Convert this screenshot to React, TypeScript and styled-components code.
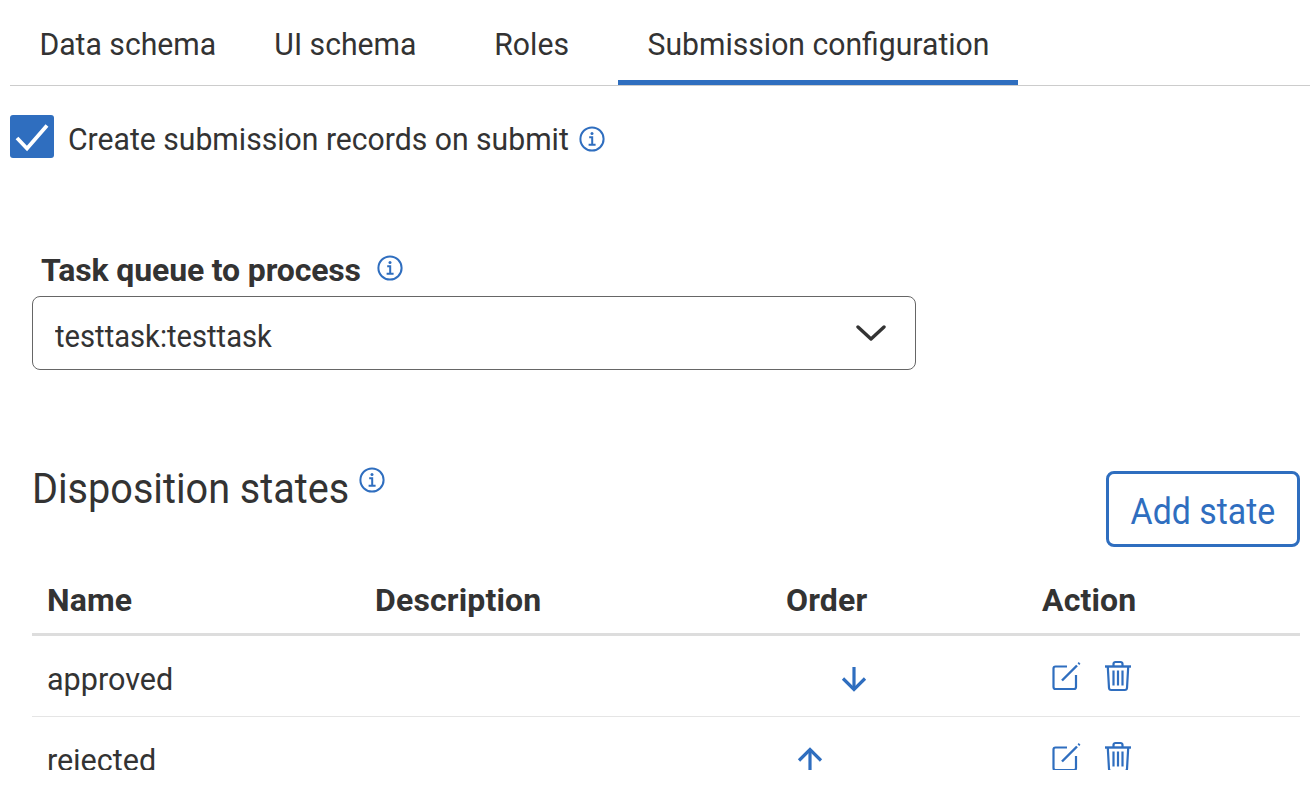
import React from 'react';
import styled, { createGlobalStyle } from 'styled-components';

const Global = createGlobalStyle`
    html, body {
        margin: 0;
        padding: 0;
        background: #fff;
        overflow: hidden;
    }
    body {
        font-family: Roboto, "Liberation Sans", sans-serif;
        color: #333;
    }
`;

const BLUE = '#2f6ebf';

const InfoIcon: React.FC = () => (
    <svg width="26" height="26" viewBox="0 0 26 26" fill="none" stroke={BLUE}>
        <circle cx="13" cy="13" r="11.6" strokeWidth="2" />
        <circle cx="13" cy="7.6" r="1.5" fill={BLUE} stroke="none" />
        <path d="M10.2 11.2h3v7.4M9.6 18.8h7" strokeWidth="2" />
    </svg>
);

const EditIcon = () => (
    <svg width="30" height="30" viewBox="0 0 30 30" fill="none" stroke={BLUE} strokeWidth="2.2">
        <path d="M16 5.5H4.5a2 2 0 0 0-2 2V26a2 2 0 0 0 2 2H23a2 2 0 0 0 2-2V14" />
        <path d="M11 19.5 26 4.5" strokeWidth="2.4" />
        <path d="M27.4 3.1 28.6 1.9" strokeWidth="2.4" />
    </svg>
);

const TrashIcon = () => (
    <svg width="28" height="32" viewBox="0 0 28 32" fill="none" stroke={BLUE} strokeWidth="2.2">
        <path d="M1 6.5h26" strokeWidth="2.4" />
        <path d="M9.5 6V3.8A2 2 0 0 1 11.5 2h5a2 2 0 0 1 2 1.8V6" />
        <path d="M3.8 7l1.2 21a2.2 2.2 0 0 0 2.2 2h13.6a2.2 2.2 0 0 0 2.2-2l1.2-21" />
        <path d="M9.5 10.5v15M14 10.5v15M18.5 10.5v15" />
    </svg>
);

const ArrowIcon: React.FC<{ up?: boolean }> = ({ up }) => (
    <svg width="26" height="26" viewBox="0 0 26 26" fill="none" stroke={BLUE} strokeWidth="3.2"
        style={up ? { transform: 'rotate(180deg)' } : undefined}>
        <path d="M13 1v22" />
        <path d="M2 12.5 13 23.5 24 12.5" />
    </svg>
);

const tabs = [
    { label: 'Data schema', width: 235 },
    { label: 'UI schema', width: 200 },
    { label: 'Roles', width: 173 },
    { label: 'Submission configuration', width: 400, active: true },
];

const rows = [
    { name: 'approved', order: 'down' },
    { name: 'rejected', order: 'up' },
];

const App: React.FC = () => {
    return (
        <S.Page>
            <Global />
            <S.TabBar>
                {tabs.map((t) => (
                    <S.Tab key={t.label} $width={t.width} $active={t.active}>
                        <S.TabText>{t.label}</S.TabText>
                    </S.Tab>
                ))}
            </S.TabBar>

            <S.CheckRow>
                <S.CheckBox>
                    <svg width="44" height="43" viewBox="0 0 44 43" fill="none" stroke="#fff" strokeWidth="3.8">
                        <path d="M7 23 17 33.5 37 10.5" />
                    </svg>
                </S.CheckBox>
                <S.CheckLabel>Create submission records on submit</S.CheckLabel>
                <S.InfoSlot $top={4}><InfoIcon /></S.InfoSlot>
            </S.CheckRow>

            <S.Section>
                <S.FieldLabel>
                    Task queue to process
                    <S.InfoSlot $top={-5}><InfoIcon /></S.InfoSlot>
                </S.FieldLabel>
                <S.Select>
                    <S.SelectValue>testtask:testtask</S.SelectValue>
                    <svg width="30" height="18" viewBox="0 0 30 18" fill="none" stroke="#333" strokeWidth="3.4" strokeLinecap="round" strokeLinejoin="round">
                        <path d="M2 3 15 15 28 3" />
                    </svg>
                </S.Select>

                <S.StatesHeader>
                    <S.Title>
                        <S.TitleText>Disposition states</S.TitleText>
                        <S.InfoSlot $top={3}><InfoIcon /></S.InfoSlot>
                    </S.Title>
                    <S.AddButton><S.AddText>Add state</S.AddText></S.AddButton>
                </S.StatesHeader>

                <S.TableHead>
                    <div>Name</div>
                    <div>Description</div>
                    <div>Order</div>
                    <div>Action</div>
                </S.TableHead>
                <S.TableBody>
                    {rows.map((r) => (
                        <S.Row key={r.name}>
                            <S.NameCell><S.NameText>{r.name}</S.NameText></S.NameCell>
                            <div />
                            <S.OrderCell>
                                <S.ArrowSlot>{r.order === 'up' && <ArrowIcon up />}</S.ArrowSlot>
                                <S.ArrowSlot>{r.order === 'down' && <ArrowIcon />}</S.ArrowSlot>
                            </S.OrderCell>
                            <S.ActionCell>
                                <EditIcon />
                                <TrashIcon />
                            </S.ActionCell>
                        </S.Row>
                    ))}
                </S.TableBody>
            </S.Section>
        </S.Page>
    );
};

const GRID = '328px 411px 256px 273px';

const S = {
    Page: styled.div`
        width: 1310px;
        height: 798px;
        padding-left: 10px;
        box-sizing: border-box;
        overflow: hidden;
    `,
    TabBar: styled.div`
        display: flex;
        height: 86px;
        box-sizing: border-box;
        border-bottom: 1px solid #ccc;
    `,
    Tab: styled.div<{ $width: number; $active?: boolean }>`
        width: ${(p) => p.$width}px;
        height: 85px;
        box-sizing: border-box;
        padding-top: 7px;
        display: flex;
        align-items: center;
        justify-content: center;
        font-size: 32px;
        color: #333;
        border-bottom: 5px solid ${(p) => (p.$active ? BLUE : 'transparent')};
    `,
    TabText: styled.span`
        display: inline-block;
        transform: scaleX(0.942);
    `,
    CheckRow: styled.div`
        display: flex;
        align-items: center;
        margin-top: 29px;
        height: 44px;
    `,
    CheckBox: styled.div`
        align-self: flex-start;
        width: 44px;
        height: 43px;
        border-radius: 3px;
        background: ${BLUE};
        margin-right: 14px;
    `,
    CheckLabel: styled.div`
        font-size: 32px;
        margin-right: -21px;
        padding-top: 4px;
        transform: scaleX(0.942);
        transform-origin: left center;
    `,
    InfoSlot: styled.span<{ $top: number }>`
        display: flex;
        margin-top: ${(p) => p.$top}px;
    `,
    Section: styled.div`
        padding-left: 22px;
    `,
    FieldLabel: styled.div`
        display: flex;
        align-items: center;
        gap: 16px;
        margin-top: 88px;
        padding: 2px 0 0 9px;
        height: 44px;
        box-sizing: border-box;
        font-size: 32px;
        font-weight: 700;
        letter-spacing: -0.15px;
    `,
    Select: styled.div`
        display: flex;
        align-items: center;
        justify-content: space-between;
        width: 884px;
        height: 74px;
        margin-top: 5px;
        padding: 0 29px 0 22px;
        box-sizing: border-box;
        border: 1px solid #666;
        border-radius: 8px;
        font-size: 32px;
    `,
    SelectValue: styled.span`
        display: inline-block;
        padding-top: 5px;
        transform: scaleX(0.912);
        transform-origin: left center;
    `,
    StatesHeader: styled.div`
        display: flex;
        justify-content: space-between;
        align-items: flex-start;
        width: 1268px;
        margin-top: 101px;
        height: 76px;
    `,
    Title: styled.div`
        display: flex;
        align-items: flex-start;
        margin-top: -7px;
        font-size: 42px;
    `,
    TitleText: styled.span`
        display: inline-block;
        margin-right: -9px;
        transform: scaleX(0.943);
        transform-origin: left center;
    `,
    AddButton: styled.div`
        width: 194px;
        height: 76px;
        box-sizing: border-box;
        display: flex;
        align-items: center;
        justify-content: center;
        border: 3px solid ${BLUE};
        border-radius: 8px;
        color: ${BLUE};
        font-size: 36px;
    `,
    AddText: styled.span`
        display: inline-block;
        padding-top: 5px;
        transform: scaleX(0.94);
    `,
    TableHead: styled.div`
        display: grid;
        grid-template-columns: ${GRID};
        align-items: center;
        width: 1268px;
        height: 89px;
        padding-top: 20px;
        box-sizing: border-box;
        border-bottom: 3px solid #ddd;
        font-size: 32px;
        font-weight: 700;
        letter-spacing: 0.15px;
        & > div {
            padding-left: 15px;
        }
    `,
    TableBody: styled.div`
        width: 1268px;
        height: 134px;
        overflow: hidden;
    `,
    Row: styled.div`
        display: grid;
        grid-template-columns: ${GRID};
        align-items: center;
        height: 81px;
        box-sizing: border-box;
        border-bottom: 1px solid #e5e5e5;
    `,
    NameCell: styled.div`
        padding-left: 15px;
        padding-top: 5px;
        font-size: 32px;
    `,
    NameText: styled.span`
        display: inline-block;
        transform: scaleX(0.955);
        transform-origin: left center;
    `,
    OrderCell: styled.div`
        display: flex;
        padding-left: 26px;
        padding-top: 5px;
        gap: 18px;
    `,
    ArrowSlot: styled.div`
        width: 26px;
        height: 26px;
    `,
    ActionCell: styled.div`
        display: flex;
        align-items: center;
        gap: 23px;
        padding-left: 24px;
    `,
};

export default App;
